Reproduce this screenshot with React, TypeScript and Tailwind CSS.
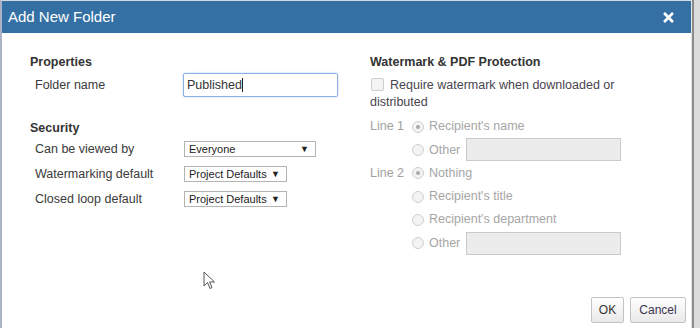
import { FaTimes } from 'react-icons/fa';

const font = { fontFamily: '"Liberation Sans", Arial, sans-serif' };

function Select({ label, width }: { label: string; width: string }) {
  return (
    <div
      className={`${width} ml-px h-[16px] border border-[#b4b4b4] bg-white flex items-center justify-between pl-[4px] pr-[6px] text-[11px] text-[#222] leading-none`}
    >
      <span>{label}</span>
      <span className="text-[9px]">▼</span>
    </div>
  );
}

function Radio({ checked }: { checked?: boolean }) {
  return (
    <span className="w-[12px] h-[12px] rounded-full border border-[#cfcfcf] bg-[#f3f3f3] flex items-center justify-center">
      {checked && <span className="w-[4px] h-[4px] rounded-full bg-[#a8a8a8]" />}
    </span>
  );
}

function LeftRow({ label, children, className }: { label: string; children: React.ReactNode; className: string }) {
  return (
    <div className={`flex items-center ${className}`}>
      <span className="w-[153px] pl-[5px] text-[12.5px] text-[#3a3a3a]">{label}</span>
      {children}
    </div>
  );
}

function OptionRow({ line, checked, label, input }: { line?: string; checked?: boolean; label: string; input?: boolean }) {
  return (
    <div className="flex items-center h-[23.3px]">
      <span className="w-[42px] text-[12.5px] text-[#a0a0a0]">{line}</span>
      <span className="w-[17px]">
        <Radio checked={checked} />
      </span>
      <span className="text-[12.5px] text-[#a6a6a6]">{label}</span>
      {input && <div className="ml-[6px] w-[155px] h-[23px] border border-[#cbcbcb] bg-[#ececec]" />}
    </div>
  );
}

export default function App() {
  return (
    <div className="relative w-[700px] h-[328px] flex bg-white overflow-hidden" style={font}>
      <div className="w-[692px] h-full flex flex-col border-l-2 border-[#aab4c4] border-t border-t-[#d6dbe2] border-r border-r-[#e4e4e4]">
        <div className="h-[32px] bg-[#3470a4] flex items-center justify-between pl-[6px] pr-[15px]">
          <span className="text-[15px] text-white">Add New Folder</span>
          <FaTimes className="text-white w-[15px] h-[15px]" />
        </div>
        <div className="flex-1 flex flex-col">
          <div className="flex">
            <div className="w-[338px] pl-[28px]">
              <div className="mt-[22px] h-[14px] leading-[14px] text-[12.5px] font-bold text-[#333]">Properties</div>
              <LeftRow label="Folder name" className="mt-[4px] h-[24px]">
                <div className="w-[155px] h-[24px] border border-[#8fb2e4] rounded-[2px] shadow-[0_0_2px_#a9c6ee] flex items-center pl-[3px] text-[12.5px] text-[#333]">
                  Published<span className="w-px h-[14px] bg-[#222]" />
                </div>
              </LeftRow>
              <div className="mt-[24px] h-[14px] leading-[14px] text-[12.5px] font-bold text-[#333]">Security</div>
              <LeftRow label="Can be viewed by" className="mt-[6px] h-[16px]">
                <Select label="Everyone" width="w-[132px]" />
              </LeftRow>
              <LeftRow label="Watermarking default" className="mt-[9px] h-[16px]">
                <Select label="Project Defaults" width="w-[103px]" />
              </LeftRow>
              <LeftRow label="Closed loop default" className="mt-[9px] h-[16px]">
                <Select label="Project Defaults" width="w-[103px]" />
              </LeftRow>
            </div>
            <div className="pl-[30px] w-[310px]">
              <div className="mt-[22px] h-[14px] leading-[14px] text-[12.5px] font-bold text-[#333]">
                Watermark &amp; PDF Protection
              </div>
              <p className="mt-[8px] text-[12.5px] leading-[17px] text-[#4a4450]">
                <span className="inline-block align-[-2px] w-[13px] h-[13px] ml-px mr-[6px] rounded-[2px] border border-[#cdcdcd] bg-[#f4f4f4]" />
                Require watermark when downloaded or distributed
              </p>
              <div className="mt-[4px]">
                <OptionRow line="Line 1" checked label="Recipient's name" />
                <OptionRow label="Other" input />
                <OptionRow line="Line 2" checked label="Nothing" />
                <OptionRow label="Recipient's title" />
                <OptionRow label="Recipient's department" />
                <OptionRow label="Other" input />
              </div>
            </div>
          </div>
          <div className="mt-auto flex justify-end gap-[6px] pr-[5px] pb-[5px]">
            <button className="w-[33px] h-[26px] border border-[#c3c3c3] rounded-[2px] bg-gradient-to-b from-white to-[#e9e9e9] text-[12px] text-[#333]">
              OK
            </button>
            <button className="w-[56px] h-[26px] border border-[#c3c3c3] rounded-[2px] bg-gradient-to-b from-white to-[#e9e9e9] text-[12px] text-[#3a3550]">
              Cancel
            </button>
          </div>
        </div>
      </div>
      <div className="flex-1 bg-[#dcdcdc] border-l-2 border-[#8c8c8c]" />
      <svg className="absolute left-[203px] top-[271px]" width="14" height="20" viewBox="0 0 14 20">
        <path d="M1 1 L1 15 L4.5 11.5 L7 17.5 L9 16.6 L6.6 11 L11.5 11 Z" fill="white" stroke="#555" strokeWidth="1" strokeLinejoin="round" />
      </svg>
    </div>
  );
}
